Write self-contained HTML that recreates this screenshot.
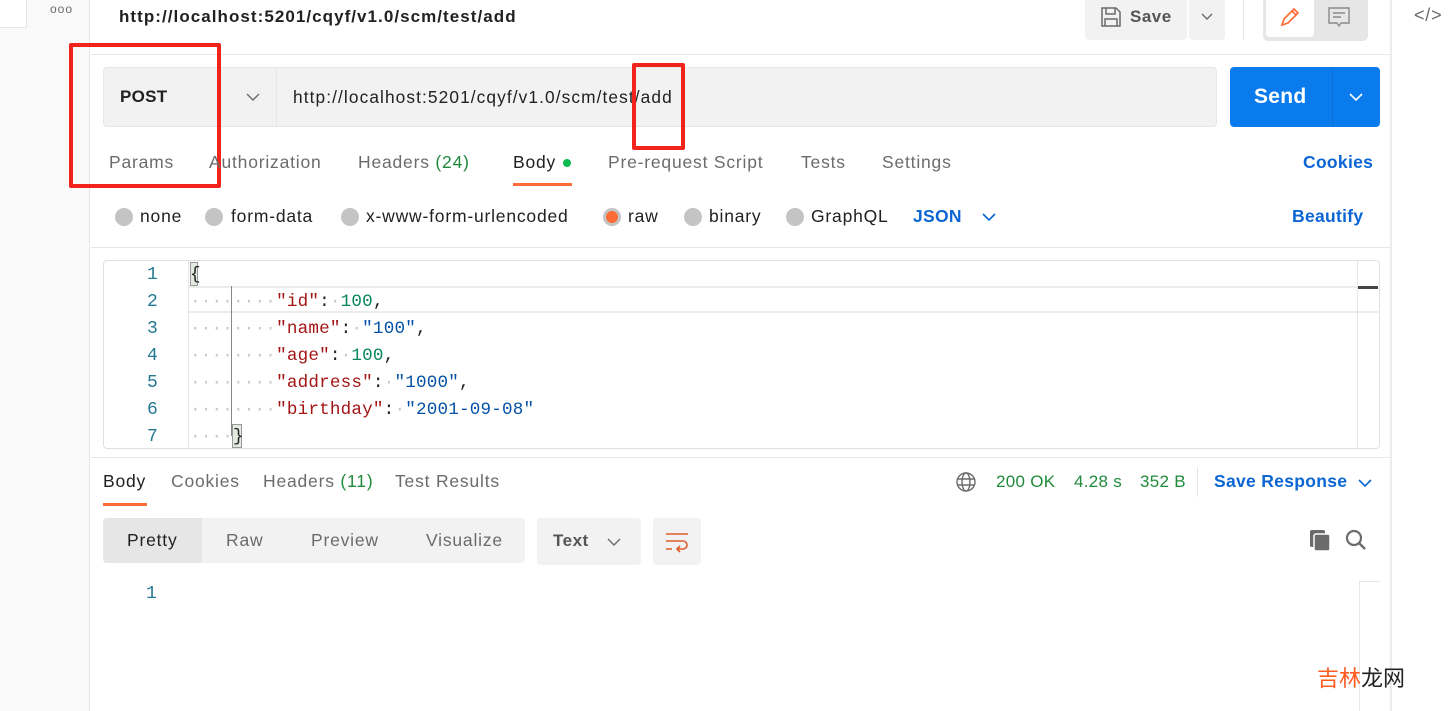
<!DOCTYPE html>
<html><head><meta charset="utf-8"><style>
*{box-sizing:border-box;margin:0;padding:0}
body{width:1452px;height:711px;overflow:hidden;background:#fff;font-family:"Liberation Sans",sans-serif;position:relative;color:#212121;letter-spacing:0.8px}
.a{position:absolute;white-space:nowrap}
.b{letter-spacing:0.3px}
.g{color:#6b6b6b}
.mono{font-family:"Liberation Mono","DejaVu Sans Mono",monospace;font-size:17.6px;letter-spacing:0.2px}
.k{color:#a31515}.n{color:#098658}.s{color:#0451a5}
.dot{color:#c8c8c8}
</style></head><body>
<!-- left sidebar -->
<div class="a" style="left:0;top:0;width:90px;height:711px;background:#f9f9f9;border-right:1px solid #e6e6e6"></div>
<div class="a" style="left:0;top:0;width:27px;height:28px;background:#fff;border:1px solid #e6e6e6;border-top:none;border-left:none"></div>
<div class="a" style="left:50px;top:2px;font-size:12px;color:#6b6b6b;letter-spacing:1px">ooo</div>
<!-- right panel -->
<div class="a" style="left:1390px;top:0;width:62px;height:711px;background:#fff;border-left:2px solid #ececec"></div>
<div class="a" style="left:1414px;top:5px;font-size:18px;color:#6b6b6b">&lt;/&gt;</div>
<!-- header -->
<div class="a" style="left:119px;top:7px;font-size:17px;font-weight:bold;color:#212121;letter-spacing:1.05px">http://localhost:5201/cqyf/v1.0/scm/test/add</div>
<div class="a" style="left:1085px;top:0;width:102px;height:40px;background:#f2f2f2;border-radius:0 0 4px 4px"></div>
<svg class="a" style="left:1100px;top:6px" width="22" height="22" viewBox="0 0 22 22"><path d="M2 2h14l4 4v14H2z M6 2v6h9V2 M5 20v-7h12v7" fill="none" stroke="#6b6b6b" stroke-width="1.5"/></svg>
<div class="a" style="left:1130px;top:7px;font-size:17px;color:#555;font-weight:bold;letter-spacing:0.5px">Save</div>
<div class="a" style="left:1189px;top:0;width:36px;height:40px;background:#f2f2f2;border-radius:0 0 4px 4px"></div>
<svg class="a" style="left:1200px;top:12px" width="14" height="10"><path d="M2 2l5 5 5-5" fill="none" stroke="#6b6b6b" stroke-width="1.4"/></svg>
<div class="a" style="left:1243px;top:0;width:1px;height:40px;background:#e6e6e6"></div>
<div class="a" style="left:1263px;top:0;width:105px;height:41px;background:#e6e6e6;border-radius:0 0 5px 5px"></div>
<div class="a" style="left:1266px;top:0;width:48px;height:37px;background:#fff;border-radius:0 0 4px 4px"></div>
<svg class="a" style="left:1278px;top:5px" width="24" height="24"><path d="M4 20l2-6L16 4l4 4L10 18z M14 6l4 4" fill="none" stroke="#ff6c37" stroke-width="1.7"/></svg>
<svg class="a" style="left:1327px;top:6px" width="24" height="24"><path d="M2 2h20v15H14l-2 3-2-3H2z M6 7h12 M6 11h8" fill="none" stroke="#8a8a8a" stroke-width="1.4"/></svg>
<div class="a" style="left:91px;top:54px;width:1299px;height:1px;background:#e6e6e6"></div>
<!-- URL bar -->
<div class="a" style="left:103px;top:67px;width:1114px;height:60px;background:#f2f2f2;border:1px solid #e6e6e6;border-radius:4px"></div>
<div class="a" style="left:276px;top:68px;width:1px;height:58px;background:#e6e6e6"></div>
<div class="a b" style="left:120px;top:87px;font-size:17px;font-weight:bold">POST</div>
<svg class="a" style="left:245px;top:92px" width="16" height="10"><path d="M2 2l6 6 6-6" fill="none" stroke="#6b6b6b" stroke-width="1.4"/></svg>
<div class="a" style="left:293px;top:87px;font-size:17.3px;color:#212121;letter-spacing:1.1px">http://localhost:5201/cqyf/v1.0/scm/test/add</div>
<div class="a" style="left:1230px;top:67px;width:150px;height:60px;background:#097bed;border-radius:4px"></div>
<div class="a" style="left:1332px;top:67px;width:1px;height:60px;background:#0a6fd6"></div>
<div class="a b" style="left:1254px;top:85px;font-size:21px;font-weight:bold;color:#fff">Send</div>
<svg class="a" style="left:1348px;top:92px" width="16" height="10"><path d="M2 2l6 6 6-6" fill="none" stroke="#fff" stroke-width="1.6"/></svg>
<!-- red boxes -->
<div class="a" style="left:69px;top:43px;width:152px;height:145px;border:4px solid #f2231b;border-radius:2px"></div>
<div class="a" style="left:632px;top:63px;width:53px;height:87px;border:4px solid #f2231b;border-radius:2px"></div>
<!-- request tabs -->
<div class="a g" style="left:109px;top:152px;font-size:17.5px">Params</div>
<div class="a g" style="left:209px;top:152px;font-size:17.5px">Authorization</div>
<div class="a g" style="left:358px;top:152px;font-size:17.5px">Headers <span style="color:#208a3c">(24)</span></div>
<div class="a" style="left:513px;top:152px;font-size:17.5px;color:#212121">Body</div>
<div class="a" style="left:563px;top:159px;width:8px;height:8px;border-radius:50%;background:#0cbb52"></div>
<div class="a" style="left:513px;top:183px;width:59px;height:3px;background:#ff6c37"></div>
<div class="a g" style="left:608px;top:152px;font-size:17.5px">Pre-request Script</div>
<div class="a g" style="left:801px;top:152px;font-size:17.5px">Tests</div>
<div class="a g" style="left:882px;top:152px;font-size:17.5px">Settings</div>
<div class="a b" style="left:1303px;top:152px;font-size:17.5px;font-weight:bold;color:#0b66d4">Cookies</div>
<!-- radios -->
<div class="a" style="left:115px;top:208px;width:18px;height:18px;border-radius:50%;background:#c4c4c4"></div>
<div class="a" style="left:140px;top:206px;font-size:17.5px">none</div>
<div class="a" style="left:205px;top:208px;width:18px;height:18px;border-radius:50%;background:#c4c4c4"></div>
<div class="a" style="left:231px;top:206px;font-size:17.5px">form-data</div>
<div class="a" style="left:341px;top:208px;width:18px;height:18px;border-radius:50%;background:#c4c4c4"></div>
<div class="a" style="left:366px;top:206px;font-size:17.5px">x-www-form-urlencoded</div>
<div class="a" style="left:603px;top:208px;width:18px;height:18px;border-radius:50%;background:#ff6c37;border:3px solid #c4c4c4"></div>
<div class="a" style="left:628px;top:206px;font-size:17.5px">raw</div>
<div class="a" style="left:684px;top:208px;width:18px;height:18px;border-radius:50%;background:#c4c4c4"></div>
<div class="a" style="left:709px;top:206px;font-size:17.5px">binary</div>
<div class="a" style="left:786px;top:208px;width:18px;height:18px;border-radius:50%;background:#c4c4c4"></div>
<div class="a" style="left:811px;top:206px;font-size:17.5px">GraphQL</div>
<div class="a b" style="left:913px;top:206px;font-size:17.5px;font-weight:bold;color:#0b66d4">JSON</div>
<svg class="a" style="left:981px;top:212px" width="16" height="10"><path d="M2 2l6 6 6-6" fill="none" stroke="#0b66d4" stroke-width="1.6"/></svg>
<div class="a b" style="left:1292px;top:206px;font-size:17.5px;font-weight:bold;color:#0b66d4">Beautify</div>
<div class="a" style="left:91px;top:247px;width:1299px;height:1px;background:#e6e6e6"></div>
<!-- editor -->
<div class="a" style="left:103px;top:260px;width:1277px;height:189px;border:1px solid #e0e0e0;border-radius:4px"></div>
<div class="a" style="left:188px;top:261px;width:1px;height:187px;background:#e6e6e6"></div>
<div class="a" style="left:189px;top:286px;width:1189px;height:27px;border-top:2px solid #ececec;border-bottom:2px solid #ececec"></div>
<div class="a" style="left:1357px;top:261px;width:1px;height:187px;background:#e6e6e6"></div>
<div class="a" style="left:1358px;top:286px;width:20px;height:3px;background:#444"></div>
<div class="a" style="left:231px;top:286px;width:1px;height:150px;background:#888"></div>
<div class="a" style="left:190px;top:262px;width:8px;height:24px;background:#e3ebe1;border:1px solid #999"></div>
<div class="a" style="left:232px;top:424px;width:10px;height:24px;background:#e3ebe1;border:1px solid #999"></div>
<div class="a mono" style="left:110px;top:262px;width:48px;text-align:right;line-height:27px;color:#237893;font-size:18px">1<br>2<br>3<br>4<br>5<br>6<br>7</div>
<div class="a mono" style="left:190px;top:262px;line-height:27px;color:#222">{<br><span class="dot">········</span><span class="k">"id"</span>:<span class="dot">·</span><span class="n">100</span>,<br><span class="dot">········</span><span class="k">"name"</span>:<span class="dot">·</span><span class="s">"100"</span>,<br><span class="dot">········</span><span class="k">"age"</span>:<span class="dot">·</span><span class="n">100</span>,<br><span class="dot">········</span><span class="k">"address"</span>:<span class="dot">·</span><span class="s">"1000"</span>,<br><span class="dot">········</span><span class="k">"birthday"</span>:<span class="dot">·</span><span class="s">"2001-09-08"</span><br><span class="dot">····</span>}</div>
<div class="a" style="left:91px;top:457px;width:1299px;height:1px;background:#e6e6e6"></div>
<!-- response tabs -->
<div class="a" style="left:103px;top:471px;font-size:17.5px">Body</div>
<div class="a" style="left:103px;top:503px;width:44px;height:3px;background:#ff6c37"></div>
<div class="a g" style="left:171px;top:471px;font-size:17.5px">Cookies</div>
<div class="a g" style="left:263px;top:471px;font-size:17.5px">Headers <span style="color:#208a3c">(11)</span></div>
<div class="a g" style="left:395px;top:471px;font-size:17.5px">Test Results</div>
<svg class="a" style="left:955px;top:471px" width="22" height="22" viewBox="0 0 22 22"><g fill="none" stroke="#6b6b6b" stroke-width="1.4"><circle cx="11" cy="11" r="9"/><ellipse cx="11" cy="11" rx="4" ry="9"/><path d="M2 8h18M2 14h18"/></g></svg>
<div class="a" style="left:996px;top:472px;font-size:17px;color:#208a3c;letter-spacing:0.3px">200 OK</div>
<div class="a" style="left:1074px;top:472px;font-size:17px;color:#208a3c;letter-spacing:0.3px">4.28 s</div>
<div class="a" style="left:1140px;top:472px;font-size:17px;color:#208a3c;letter-spacing:0.3px">352 B</div>
<div class="a" style="left:1197px;top:467px;width:1px;height:30px;background:#e6e6e6"></div>
<div class="a b" style="left:1214px;top:471px;font-size:17.5px;font-weight:bold;color:#0b66d4">Save Response</div>
<svg class="a" style="left:1357px;top:478px" width="16" height="10"><path d="M2 2l6 6 6-6" fill="none" stroke="#0b66d4" stroke-width="1.6"/></svg>
<!-- response toolbar -->
<div class="a" style="left:103px;top:518px;width:422px;height:45px;background:#f2f2f2;border-radius:4px"></div>
<div class="a" style="left:103px;top:518px;width:99px;height:45px;background:#e6e6e6;border-radius:4px 0 0 4px"></div>
<div class="a" style="left:127px;top:530px;font-size:17.5px;color:#212121">Pretty</div>
<div class="a g" style="left:226px;top:530px;font-size:17.5px">Raw</div>
<div class="a g" style="left:311px;top:530px;font-size:17.5px">Preview</div>
<div class="a g" style="left:426px;top:530px;font-size:17.5px">Visualize</div>
<div class="a" style="left:537px;top:518px;width:104px;height:47px;background:#f2f2f2;border-radius:4px"></div>
<div class="a" style="left:553px;top:531px;font-size:17px;font-weight:bold;color:#555;letter-spacing:0.5px">Text</div>
<svg class="a" style="left:606px;top:537px" width="16" height="10"><path d="M2 2l6 6 6-6" fill="none" stroke="#6b6b6b" stroke-width="1.4"/></svg>
<div class="a" style="left:653px;top:518px;width:48px;height:47px;background:#f2f2f2;border-radius:4px"></div>
<svg class="a" style="left:665px;top:531px" width="24" height="22"><path d="M1 3h22 M1 10h17a4 4 0 0 1 0 8h-6 M15 15l-3 3 3 3 M1 18h6" fill="none" stroke="#e05b2c" stroke-width="1.6"/></svg>
<svg class="a" style="left:1308px;top:528px" width="24" height="24"><rect x="2" y="2" width="15" height="17" rx="2" fill="#6b6b6b"/><rect x="6" y="6" width="16" height="17" rx="2" fill="#6b6b6b" stroke="#fff" stroke-width="1.5"/></svg>
<svg class="a" style="left:1344px;top:528px" width="24" height="24"><circle cx="10" cy="10" r="7" fill="none" stroke="#6b6b6b" stroke-width="2.2"/><path d="M15 15l6 6" stroke="#6b6b6b" stroke-width="2.4"/></svg>
<div class="a mono" style="left:146px;top:584px;font-size:18px;color:#237893">1</div>
<div class="a" style="left:1359px;top:581px;width:1px;height:130px;background:#e6e6e6"></div>
<div class="a" style="left:1359px;top:581px;width:21px;height:1px;background:#e6e6e6"></div>
<div class="a" style="left:1317px;top:661px;font-size:22px;letter-spacing:0;font-family:'Liberation Sans','Noto Sans CJK SC',sans-serif"><span style="color:#ff5a1f">吉林</span><span style="color:#222">龙网</span></div>
</body></html>
